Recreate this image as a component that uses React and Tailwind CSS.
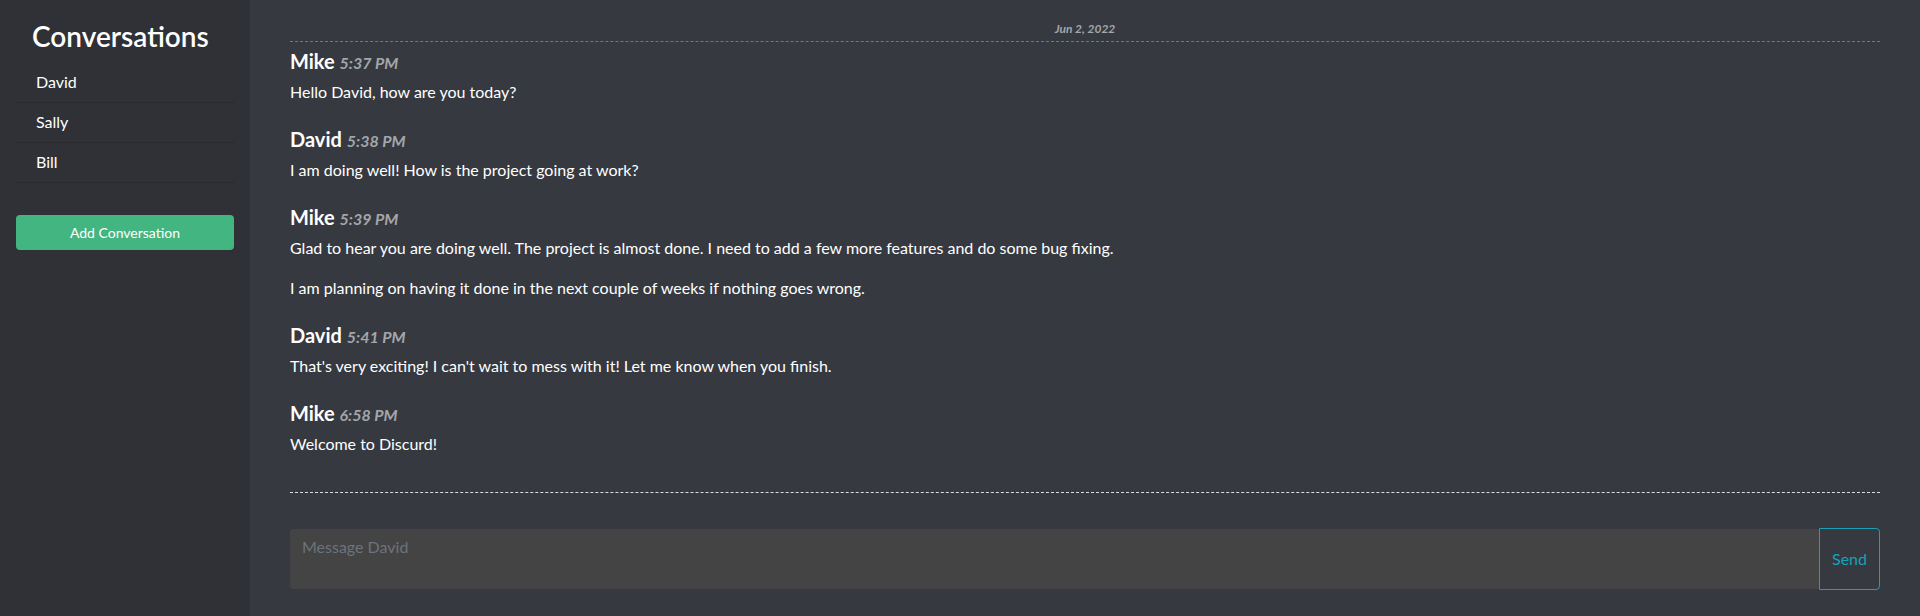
import React, { useState } from 'react';

const conversations = ['David', 'Sally', 'Bill'];

const messages = [
  { author: 'Mike', time: '5:37 PM', lines: ['Hello David, how are you today?'] },
  { author: 'David', time: '5:38 PM', lines: ['I am doing well! How is the project going at work?'] },
  {
    author: 'Mike',
    time: '5:39 PM',
    lines: [
      'Glad to hear you are doing well. The project is almost done. I need to add a few more features and do some bug fixing.',
      'I am planning on having it done in the next couple of weeks if nothing goes wrong.',
    ],
  },
  { author: 'David', time: '5:41 PM', lines: ["That's very exciting! I can't wait to mess with it! Let me know when you finish."] },
  { author: 'Mike', time: '6:58 PM', lines: ['Welcome to Discurd!'] },
];

export default function App() {
  const [draft, setDraft] = useState('');

  return (
    <div className="flex h-screen text-white font-['Segoe_UI','Lato',sans-serif]">
      <aside className="w-[250px] shrink-0 bg-[#2f3136] px-4">
        <h3 className="pt-5 mb-[9px] pl-4 text-[28px] font-semibold leading-[1.2]">Conversations</h3>
        <ul>
          {conversations.map((name) => (
            <li key={name} className="h-10 flex items-center pl-5 border-b border-[#27292d] text-base">
              {name}
            </li>
          ))}
        </ul>
        <button className="mt-8 w-full rounded bg-[#43b581] py-[7px] text-sm leading-[21px]">
          Add Conversation
        </button>
      </aside>

      <main className="flex-1 bg-[#36393f] px-10">
        <div className="pt-[21px] pb-1 text-center text-xs leading-4 font-bold italic text-[#a3a6aa]">
          Jun 2, 2022
        </div>
        <div className="h-[452px] border-y border-dashed border-t-[#74777c] border-b-[#dcdddf] pt-[7px]">
          {messages.map((m, i) => (
            <div key={i} className="pb-[7px]">
              <h5 className="mb-[7px] text-xl leading-6 font-bold">
                {m.author} <span className="text-base leading-none italic font-bold text-[#a3a6aa]">{m.time}</span>
              </h5>
              {m.lines.map((line, j) => (
                <p key={j} className="mb-4 text-base leading-6">{line}</p>
              ))}
            </div>
          ))}
        </div>
        <div className="mt-[35px] flex items-center">
          <textarea
            value={draft}
            onChange={(e) => setDraft(e.target.value)}
            placeholder="Message David"
            className="h-[60px] flex-1 resize-none rounded-l bg-[#444444] px-3 py-[6px] text-base leading-6 text-white placeholder:text-[#6b737c] outline-none"
          />
          <button className="h-[62px] w-[61px] rounded-r border border-[#17a2b8] text-base text-[#17a2b8]">
            Send
          </button>
        </div>
      </main>
    </div>
  );
}
